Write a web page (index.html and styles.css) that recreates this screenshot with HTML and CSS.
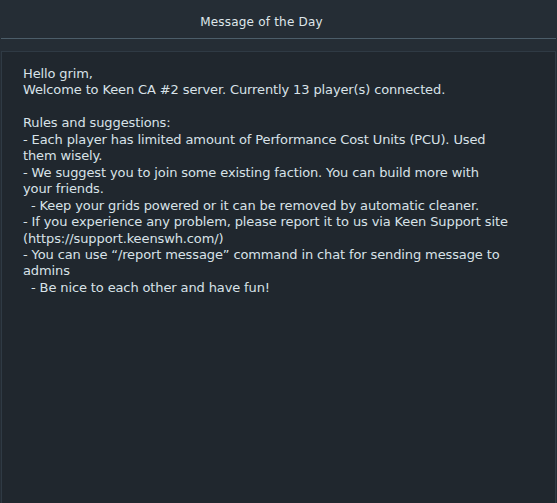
FILE: index.html
```html
<!DOCTYPE html>
<html>
<head>
<meta charset="utf-8">
<link rel="stylesheet" href="styles.css">
</head>
<body>
<div class="dialog">
  <div class="header">
    <h1 class="title">Message of the Day</h1>
  </div>
  <div class="panel">
    <div class="message">Hello grim,
Welcome to Keen CA #2 server. Currently 13 player(s) connected.

Rules and suggestions:
- Each player has limited amount of Performance Cost Units (PCU). Used
them wisely.
- We suggest you to join some existing faction. You can build more with
your friends.
  - Keep your grids powered or it can be removed by automatic cleaner.
- If you experience any problem, please report it to us via Keen Support site
(https://support.keenswh.com/)
- You can use “/report message” command in chat for sending message to
admins
  - Be nice to each other and have fun!</div>
  </div>
</div>
</body>
</html>
```

FILE: styles.css
```css
html, body {
  margin: 0;
  padding: 0;
  width: 557px;
  height: 503px;
  overflow: hidden;
  background: #252d35;
}
.dialog {
  display: flex;
  flex-direction: column;
  height: 503px;
  background: #252d35;
  font-family: "DejaVu Sans", "Liberation Sans", sans-serif;
  color: #d4dfe5;
}
.header {
  height: 38px;
  display: flex;
  align-items: center;
  justify-content: center;
  margin: 0 1px;
  border-bottom: 1px solid #4c5d69;
}
.title {
  margin: 0;
  font-size: 12px;
  font-weight: normal;
  letter-spacing: 0.2px;
  color: #dfe6ea;
  padding: 6px 34px 0 0;
}
.panel {
  flex: 1;
  margin: 12px 1px 0 1px;
  background: #20272e;
  border: 1px solid #2f3a44;
  border-bottom: none;
  padding: 14px 0 0 21px;
}
.message {
  white-space: pre;
  font-size: 13px;
  line-height: 16.45px;
  letter-spacing: -0.12px;
  color: #d8e2e8;
}
```
